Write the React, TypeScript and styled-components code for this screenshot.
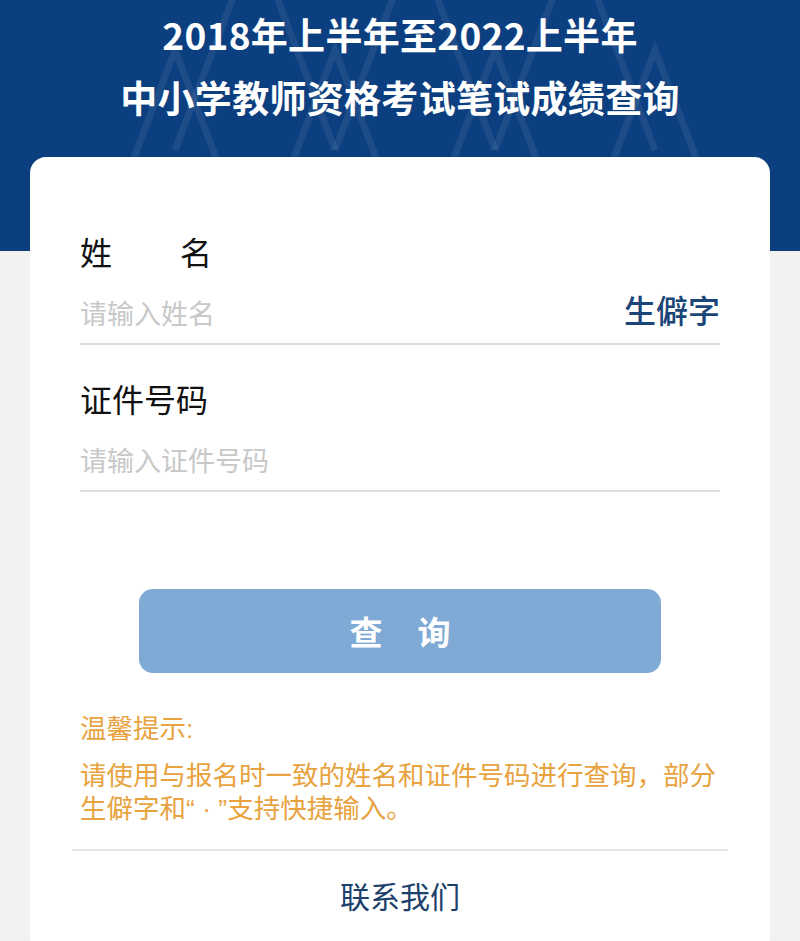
import React from 'react';
import styled, { createGlobalStyle } from 'styled-components';

const GlobalStyle = createGlobalStyle`
  html, body {
    margin: 0;
    padding: 0;
    background: #f2f2f2;
    font-family: "Noto Sans CJK SC", "Noto Sans", sans-serif;
  }
  * {
    box-sizing: border-box;
  }
`;

// styles
const Page = styled.div`
  width: 800px;
  height: 941px;
  overflow: hidden;
  background: #f2f2f2;
`;

const Header = styled.header`
  position: relative;
  height: 251px;
  background: #0c3f7f;
  overflow: hidden;
  padding-top: 3px;
`;

const Pattern = styled.svg`
  position: absolute;
  left: 0;
  top: 0;
  width: 800px;
  height: 251px;
`;

const TitleLine = styled.h1`
  position: relative;
  margin: 0;
  text-align: center;
  color: #ffffff;
  font-size: 37px;
  font-weight: 700;
  line-height: 63px;
  letter-spacing: 0.3px;
`;

const Card = styled.main`
  position: relative;
  margin: -94px 30px 0;
  height: 796px;
  background: #ffffff;
  border-radius: 16px;
  padding: 74px 50px 0;
`;

const Field = styled.section`
  & + & {
    margin-top: 33px;
  }
`;

const Label = styled.div<{ $spread?: boolean }>`
  display: flex;
  justify-content: ${(p) => (p.$spread ? 'space-between' : 'flex-start')};
  width: ${(p) => (p.$spread ? '132px' : 'auto')};
  color: #111111;
  font-size: 32px;
  line-height: 40px;
`;

const InputRow = styled.div`
  display: flex;
  align-items: center;
  padding: 22px 0 10px;
  border-bottom: 2px solid #dedede;
`;

const Input = styled.input`
  flex: 1;
  min-width: 0;
  border: none;
  outline: none;
  padding: 0;
  background: transparent;
  font-family: inherit;
  font-size: 27px;
  line-height: 40px;
  height: 40px;
  color: #222;
  &::placeholder {
    color: #c8c8c8;
  }
`;

const RareChar = styled.span`
  color: #1b4677;
  font-size: 32px;
  font-weight: 500;
  line-height: 40px;
  margin-top: -8px;
`;

const SubmitButton = styled.button`
  display: flex;
  align-items: center;
  justify-content: center;
  gap: 35px;
  width: 522px;
  height: 84px;
  margin: 97px 0 0 59px;
  border: none;
  border-radius: 14px;
  background: #7eaad5;
  color: #ffffff;
  font-family: inherit;
  font-size: 33px;
  font-weight: 700;
`;

const Tips = styled.div`
  margin-top: 37px;
  color: #e8a340;
  font-family: "Liberation Sans", "Noto Sans CJK SC", sans-serif;
  font-size: 26.5px;
`;

const TipTitle = styled.div`
  line-height: 34px;
  padding-top: 2px;
  height: 34px;
`;

const TipBody = styled.div`
  margin-top: 14px;
  line-height: 33px;
`;

const TipLine = styled.div`
  white-space: nowrap;
  padding-top: 2px;
  height: 33px;
`;

const Divider = styled.hr`
  margin: 25px -8px 0;
  border: none;
  border-top: 2px solid #e6e6e6;
`;

const Contact = styled.div`
  margin-top: 24px;
  text-align: center;
  color: #1c3f6b;
  font-size: 30px;
  line-height: 40px;
`;

const lowRow = [175, 335, 495, 655];
const highRow = [255, 415, 575];

const App: React.FC = () => (
    <Page>
        <GlobalStyle />
        <Header>
            <Pattern viewBox="0 0 800 251" aria-hidden="true">
                <g fill="none" stroke="rgba(255,255,255,0.07)" strokeWidth="7">
                    {lowRow.map((x) => (
                        <polyline key={`l${x}`} points={`${x - 80},260 ${x},50 ${x + 80},260`} />
                    ))}
                    {highRow.map((x) => (
                        <polyline key={`h${x}`} points={`${x - 80},150 ${x},-60 ${x + 80},150`} />
                    ))}
                </g>
            </Pattern>
            <TitleLine>2018年上半年至2022上半年</TitleLine>
            <TitleLine>中小学教师资格考试笔试成绩查询</TitleLine>
        </Header>
        <Card>
            <Field>
                <Label $spread>
                    <span>姓</span>
                    <span>名</span>
                </Label>
                <InputRow>
                    <Input placeholder="请输入姓名" />
                    <RareChar>生僻字</RareChar>
                </InputRow>
            </Field>
            <Field>
                <Label>证件号码</Label>
                <InputRow>
                    <Input placeholder="请输入证件号码" />
                </InputRow>
            </Field>
            <SubmitButton type="button">
                <span>查</span>
                <span>询</span>
            </SubmitButton>
            <Tips>
                <TipTitle>温馨提示:</TipTitle>
                <TipBody>
                    <TipLine>请使用与报名时一致的姓名和证件号码进行查询，部分</TipLine>
                    <TipLine>生僻字和“ · ”支持快捷输入。</TipLine>
                </TipBody>
            </Tips>
            <Divider />
            <Contact>联系我们</Contact>
        </Card>
    </Page>
);

export default App;
